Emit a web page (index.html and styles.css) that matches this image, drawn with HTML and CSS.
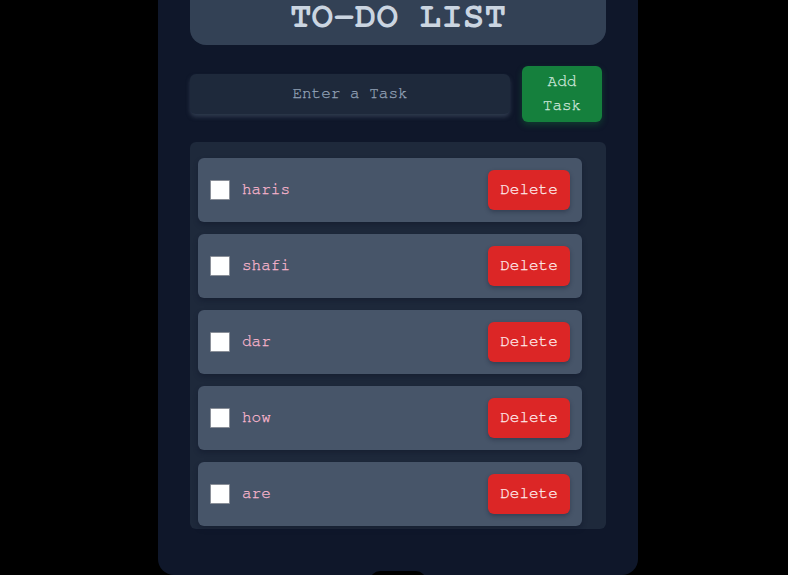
FILE: index.html
```html
<!DOCTYPE html>
<html>
<head>
<meta charset="utf-8">
<link rel="stylesheet" href="styles.css">
</head>
<body>
<div class="card">
  <div class="title-box"><h1 class="title">TO-DO LIST</h1></div>
  <div class="add-row">
    <input class="task-input" type="text" placeholder="Enter a Task">
    <button class="add-btn">Add<br>Task</button>
  </div>
  <div class="list">
    <div class="item"><span class="check"></span><span class="label">haris</span><button class="del">Delete</button></div>
    <div class="item"><span class="check"></span><span class="label">shafi</span><button class="del">Delete</button></div>
    <div class="item"><span class="check"></span><span class="label">dar</span><button class="del">Delete</button></div>
    <div class="item"><span class="check"></span><span class="label">how</span><button class="del">Delete</button></div>
    <div class="item"><span class="check"></span><span class="label">are</span><button class="del">Delete</button></div>
  </div>
  <div class="notch"></div>
</div>
</body>
</html>
```
FILE: styles.css
```css
html, body {
  margin: 0;
  padding: 0;
  background: #000;
  height: 100%;
  overflow: hidden;
}
body {
  padding-left: 8px;
  font-family: "Nimbus Mono PS", "Nimbus Mono L", "FreeMono", "Courier", "Courier New", monospace;
}
.card {
  position: relative;
  width: 480px;
  box-sizing: border-box;
  margin: -51px auto 0;
  padding: 32px 32px 46px;
  background: #0f172a;
  border-radius: 16px;
}
.title-box {
  background: #334155;
  border-radius: 16px;
  height: 64px;
  display: flex;
  align-items: center;
  justify-content: center;
}
.title {
  margin: 0;
  padding-top: 6px;
  font-size: 36px;
  line-height: 28px;
  font-weight: bold;
  color: #cbd5e1;
}
.add-row {
  display: flex;
  align-items: center;
  gap: 12px;
  margin-top: 21px;
}
.task-input {
  width: 320px;
  height: 40px;
  box-sizing: border-box;
  border: none;
  outline: none;
  background: #1e293b;
  border-radius: 6px;
  box-shadow: 0 3px 4px rgba(71, 85, 105, 0.55);
  text-align: center;
  font-family: inherit;
  font-size: 16px;
  padding: 0 0 2px;
  color: #cbd5e1;
  -webkit-text-stroke: 0.25px currentColor;
}
.task-input::placeholder {
  color: #94a3b8;
}
.add-btn {
  width: 80px;
  height: 56px;
  border: none;
  background: #15803d;
  border-radius: 6px;
  color: #d1e7dd;
  font-family: inherit;
  font-size: 16px;
  line-height: 24px;
  padding: 0 0 2px;
  box-shadow: 0 3px 6px rgba(21, 128, 61, 0.35);
  -webkit-text-stroke: 0.25px currentColor;
}
.list {
  margin-top: 20px;
  background: #1e293b;
  border-radius: 6px;
  padding: 16px 24px 3px 8px;
  display: flex;
  flex-direction: column;
  gap: 12px;
}
.item {
  height: 64px;
  display: flex;
  align-items: center;
  padding: 0 12px;
  background: #475569;
  border-radius: 6px;
  box-shadow: 0 3px 5px rgba(15, 23, 42, 0.45);
}
.check {
  width: 20px;
  height: 20px;
  box-sizing: border-box;
  background: #fff;
  border: 1px solid #8a8f98;
  border-radius: 1px;
  margin-right: 12px;
}
.label {
  flex: 1;
  color: #fbb6ce;
  font-size: 16px;
  padding-bottom: 2px;
  -webkit-text-stroke: 0.25px currentColor;
}
.del {
  width: 82px;
  height: 40px;
  border: none;
  border-radius: 6px;
  background: #dc2626;
  color: #fff0f0;
  font-family: inherit;
  font-size: 16px;
  padding: 0 0 2px;
  box-shadow: 0 2px 4px rgba(15, 23, 42, 0.35);
  -webkit-text-stroke: 0.25px currentColor;
}
.notch {
  position: absolute;
  left: 212px;
  bottom: -8px;
  width: 56px;
  height: 12px;
  background: #000;
  border-radius: 10px 10px 0 0;
}
```
